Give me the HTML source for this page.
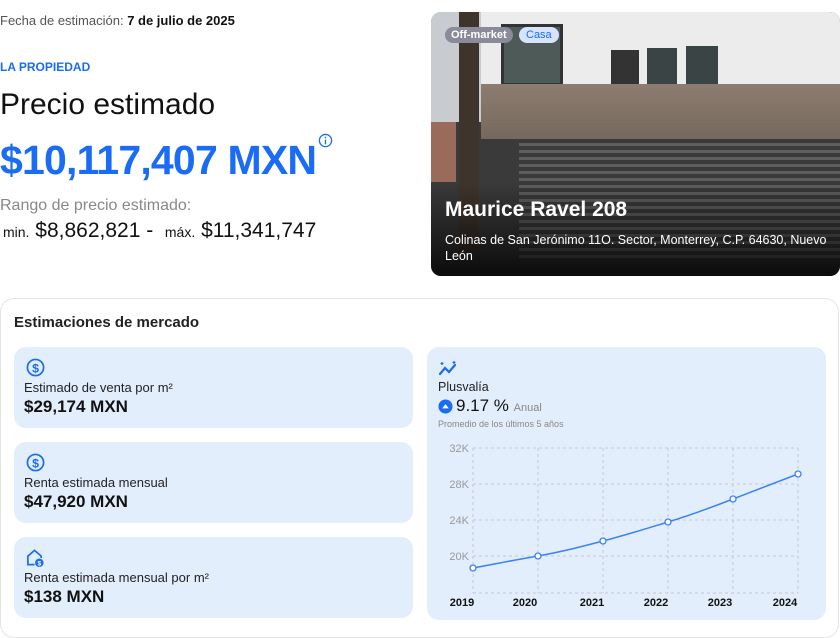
<!DOCTYPE html>
<html><head><meta charset="utf-8"><style>
*{margin:0;padding:0;box-sizing:border-box}
body{width:840px;height:630px;background:#fff;font-family:"Liberation Sans",sans-serif;position:relative;overflow:hidden;color:#111}
.a{position:absolute;white-space:nowrap}
.box{position:absolute;background:#e3eefd;border-radius:12px}
.lab{font-size:13px;color:#222}
.val{font-size:17px;font-weight:bold;color:#111}
</style></head><body>
<div class="a" style="left:0;top:13px;font-size:13px;color:#555">Fecha de estimación: <b style="color:#111">7 de julio de 2025</b></div>
<div class="a" style="left:0;top:60px;font-size:12px;font-weight:bold;color:#1a6cf5">LA PROPIEDAD</div>
<div class="a" style="left:0;top:88px;font-size:30px;color:#111">Precio estimado</div>
<div class="a" style="left:0;top:137px;font-size:41px;font-weight:bold;color:#1a6cf5;letter-spacing:-0.8px">$10,117,407 MXN</div>
<svg class="a" style="left:318px;top:133px" width="15" height="15" viewBox="0 0 16 16"><circle cx="8" cy="8" r="6.5" fill="none" stroke="#1a6cf5" stroke-width="1.4"/><rect x="7.3" y="7" width="1.4" height="5" fill="#1a6cf5"/><circle cx="8" cy="4.8" r="0.9" fill="#1a6cf5"/></svg>
<div class="a" style="left:0;top:197px;font-size:16px;color:#888">Rango de precio estimado:</div>
<div class="a" style="left:3px;top:219px;font-size:21px;color:#111"><span style="font-size:14px">min.</span> $8,862,821 - &nbsp;<span style="font-size:14px">máx.</span> $11,341,747</div>

<div class="a" style="left:431px;top:12px;width:409px;height:264px;border-radius:10px;overflow:hidden;background:#3a3a3a">
 <div class="a" style="left:0;top:0;width:409px;height:80px;background:#ececec"></div>
 <div class="a" style="left:0;top:0;width:50px;height:110px;background:#c8ccd0"></div>
 <div class="a" style="left:70px;top:12px;width:62px;height:62px;background:#4d5a58;border:3px solid #333"></div>
 <div class="a" style="left:180px;top:38px;width:28px;height:44px;background:#333"></div>
 <div class="a" style="left:216px;top:36px;width:30px;height:44px;background:#3a4444"></div>
 <div class="a" style="left:255px;top:34px;width:32px;height:40px;background:#3a4444"></div>
 <div class="a" style="left:50px;top:72px;width:359px;height:55px;background:linear-gradient(180deg,#8d7d70,#76685c)"></div>
 <div class="a" style="left:0;top:110px;width:25px;height:60px;background:#9a6a5a"></div>
 <div class="a" style="left:28px;top:0;width:20px;height:240px;background:#3e342c"></div>
 <div class="a" style="left:88px;top:127px;width:321px;height:120px;background:repeating-linear-gradient(180deg,#3a3a3a 0 4px,#5e5e5e 4px 7px)"></div>
 <div class="a" style="left:0;top:170px;width:409px;height:94px;background:linear-gradient(180deg,rgba(0,0,0,0),rgba(0,0,0,.8))"></div>
 <div class="a" style="left:14px;top:15px;background:#8a8a9a;color:#fff;font-size:11px;font-weight:bold;padding:2px 6px;border-radius:9px">Off-market</div>
 <div class="a" style="left:88px;top:15px;background:#d6e4ff;color:#1a6cf5;font-size:11px;padding:2px 7px;border-radius:9px">Casa</div>
 <div class="a" style="left:14px;top:186px;font-size:21px;font-weight:bold;color:#fff">Maurice Ravel 208</div>
 <div class="a" style="left:14px;top:220px;font-size:12.5px;color:#fff;line-height:16px;white-space:normal;width:390px">Colinas de San Jerónimo 11O. Sector, Monterrey, C.P. 64630, Nuevo León</div>
</div>

<div class="a" style="left:0;top:298px;width:839px;height:340px;border:1px solid #e4e4e4;border-radius:14px"></div>
<div class="a" style="left:14px;top:314px;font-size:15px;font-weight:bold;color:#222">Estimaciones de mercado</div>

<div class="box" style="left:14px;top:347px;width:399px;height:81px"></div>
<svg class="a" style="left:26px;top:358px" width="19" height="19" viewBox="0 0 20 20"><circle cx="10" cy="10" r="8.5" fill="none" stroke="#1a6cf5" stroke-width="1.8"/><text x="10" y="15" font-size="13" text-anchor="middle" fill="#1a6cf5" font-family="Liberation Sans" font-weight="bold">$</text></svg>
<div class="a lab" style="left:24px;top:380px">Estimado de venta por m²</div>
<div class="a val" style="left:24px;top:397px">$29,174 MXN</div>

<div class="box" style="left:14px;top:442px;width:399px;height:81px"></div>
<svg class="a" style="left:26px;top:453px" width="19" height="19" viewBox="0 0 20 20"><circle cx="10" cy="10" r="8.5" fill="none" stroke="#1a6cf5" stroke-width="1.8"/><text x="10" y="15" font-size="13" text-anchor="middle" fill="#1a6cf5" font-family="Liberation Sans" font-weight="bold">$</text></svg>
<div class="a lab" style="left:24px;top:475px">Renta estimada mensual</div>
<div class="a val" style="left:24px;top:492px">$47,920 MXN</div>

<div class="box" style="left:14px;top:537px;width:399px;height:81px"></div>
<svg class="a" style="left:26px;top:548px" width="19" height="20" viewBox="0 0 20 20"><path d="M9 17H2V8l7-6 7 6v2" fill="none" stroke="#1a6cf5" stroke-width="1.8"/><circle cx="14" cy="15" r="4.5" fill="#1a6cf5"/><text x="14" y="18" font-size="7" text-anchor="middle" fill="#fff" font-family="Liberation Sans" font-weight="bold">$</text></svg>
<div class="a lab" style="left:24px;top:570px">Renta estimada mensual por m²</div>
<div class="a val" style="left:24px;top:587px">$138 MXN</div>

<div class="box" style="left:427px;top:347px;width:399px;height:273px"></div>
<svg class="a" style="left:438px;top:360px" width="20" height="16" viewBox="0 0 20 16"><path d="M2 14l5-6 4 4 6-7" fill="none" stroke="#1a6cf5" stroke-width="2.2" stroke-linecap="round"/><path d="M4 2v3M2.5 3.5h3M16 1v3M14.5 2.5h3" stroke="#1a6cf5" stroke-width="1.2"/></svg>
<div class="a" style="left:438px;top:380px;font-size:12.5px;color:#222">Plusvalía</div>
<svg class="a" style="left:438px;top:399px" width="15" height="15" viewBox="0 0 16 16"><circle cx="8" cy="8" r="7.5" fill="#1a6cf5"/><path d="M4.5 10h7L8 5.5z" fill="#fff"/></svg>
<div class="a" style="left:456px;top:396px;font-size:17px;color:#111">9.17 % <span style="font-size:11px;color:#888">Anual</span></div>
<div class="a" style="left:438px;top:419px;font-size:9px;color:#888">Promedio de los últimos 5 años</div>
<svg class="a" style="left:427px;top:430px" width="400" height="185" viewBox="427 430 400 185" font-family="Liberation Sans">
<g stroke="#c4c8d0" stroke-dasharray="3 3" stroke-width="1">
<line x1="473" y1="448" x2="798" y2="448"/><line x1="473" y1="484" x2="798" y2="484"/><line x1="473" y1="520" x2="798" y2="520"/><line x1="473" y1="556" x2="798" y2="556"/><line x1="473" y1="593" x2="798" y2="593"/>
<line x1="473" y1="448" x2="473" y2="593"/><line x1="538" y1="448" x2="538" y2="593"/><line x1="603" y1="448" x2="603" y2="593"/><line x1="668" y1="448" x2="668" y2="593"/><line x1="733" y1="448" x2="733" y2="593"/><line x1="798" y1="448" x2="798" y2="593"/>
</g>
<g fill="#999" font-size="11" text-anchor="end"><text x="469" y="452">32K</text><text x="469" y="488">28K</text><text x="469" y="524">24K</text><text x="469" y="560">20K</text></g>
<path d="M473 568C500 563 515 560 538 556S580 547 603 541S645 529 668 522S710 508 733 499S780 481 798 474" fill="none" stroke="#3b82f6" stroke-width="1.5"/>
<g fill="#fff" stroke="#3b82f6" stroke-width="1.3"><circle cx="473" cy="568" r="3"/><circle cx="538" cy="556" r="3"/><circle cx="603" cy="541" r="3"/><circle cx="668" cy="522" r="3"/><circle cx="733" cy="499" r="3"/><circle cx="798" cy="474" r="3"/></g>
<g fill="#111" font-size="11" font-weight="bold" text-anchor="middle"><text x="462" y="606">2019</text><text x="525" y="606">2020</text><text x="592" y="606">2021</text><text x="656" y="606">2022</text><text x="720" y="606">2023</text><text x="785" y="606">2024</text></g>
</svg>
</body></html>
